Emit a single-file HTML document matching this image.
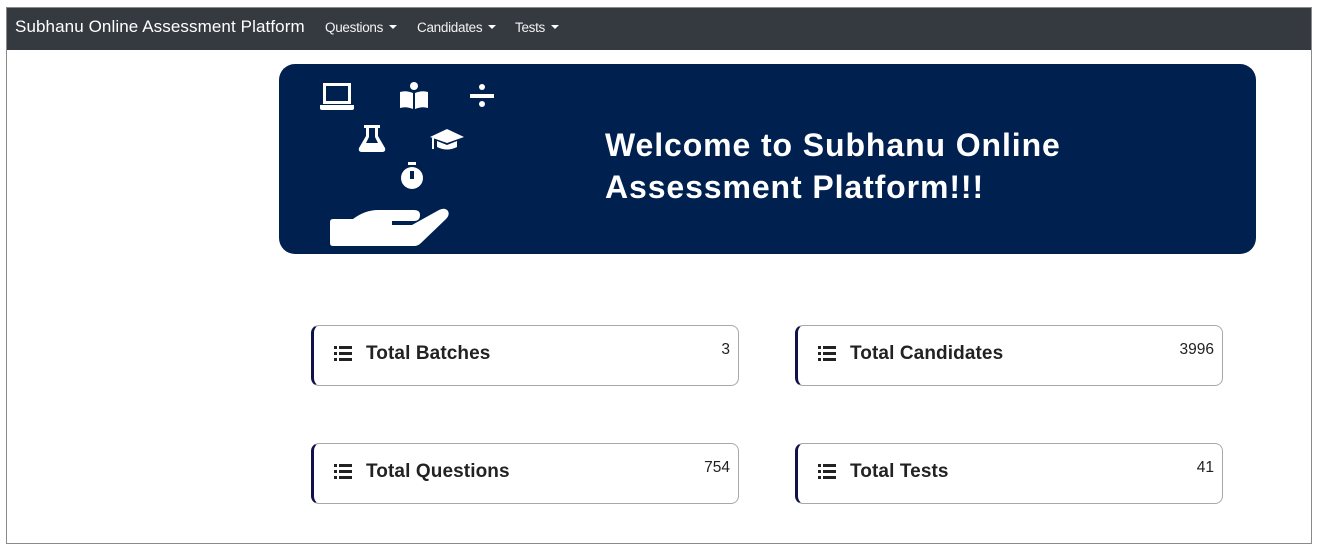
<!DOCTYPE html>
<html><head><meta charset="utf-8"><style>
*{box-sizing:border-box;margin:0;padding:0}
body{width:1320px;height:552px;background:#fff;font-family:"Liberation Sans",sans-serif;position:relative;overflow:hidden}
.frame{position:absolute;left:6px;top:7px;width:1306px;height:537px;border:1px solid #8a8a8a}
.nav{position:absolute;left:7px;top:8px;width:1304px;height:42px;background:#343a40;color:#fff}
.brand{position:absolute;left:8px;top:9px;font-size:17px;letter-spacing:0.1px}
.item{position:absolute;top:12px;font-size:13.5px;color:#f2f2f2;letter-spacing:-0.3px}
.item:after{content:"";display:inline-block;margin-left:6px;vertical-align:3px;border-left:4px solid transparent;border-right:4px solid transparent;border-top:4px solid #fff}
.banner{position:absolute;left:279px;top:64px;width:977px;height:190px;background:#00204f;border-radius:16px}
.title{position:absolute;left:605px;top:124px;color:#fff;font-size:32px;font-weight:bold;line-height:42px;letter-spacing:0.9px}
.card{position:absolute;width:428px;height:61px;border:1px solid #a8a8a8;border-left:3px solid #12124a;border-radius:8px;background:#fff}
.card .lbl{position:absolute;left:52px;top:17px;font-size:19px;color:#222;font-weight:bold;letter-spacing:0.1px}
.card .num{position:absolute;right:8px;top:15px;font-size:15.5px;color:#222}
.card svg{position:absolute;left:20px;top:20px}
</style></head><body>
<div class="frame"></div>
<div class="nav">
<div class="brand">Subhanu Online Assessment Platform</div>
<div class="item" style="left:318px">Questions</div>
<div class="item" style="left:410px">Candidates</div>
<div class="item" style="left:508px">Tests</div>
</div>
<div class="banner"></div>
<svg style="position:absolute;left:0;top:0" width="1320" height="552" fill="#fff">
<path d="M323 83h28v21h-28z M326 86v15h22v-15z" fill-rule="evenodd"/>
<path d="M320 105h34v3q0 2-2 2h-30q-2 0-2-2z"/>
<circle cx="414" cy="86" r="4"/>
<path d="M400 92q6-2 13 1v16q-7-3-13-1z M415 93q7-3 13-1v16q-6-2-13 1z"/>
<circle cx="482" cy="87" r="3"/><rect x="470" y="94" width="24" height="4"/><circle cx="482" cy="104" r="3"/>
<path d="M364 125h16v3h-2v8l7 12q1 4-3 4h-20q-4 0-3-4l7-12v-8h-2z M369 128v9l-3 6h12l-3-6v-9z" fill-rule="evenodd"/>
<path d="M430 137l17-8 17 8-17 6z M437 141v6q10 5 20 0v-6l-10 4z"/><rect x="432" y="138" width="2" height="11"/>
<rect x="408" y="162" width="8" height="3"/><circle cx="412" cy="178" r="11"/>
<rect x="410" y="171" width="4" height="8" fill="#00204f"/>
<path d="M330 222q0-3 3-3h20q12-9 25-9h36q6 0 6 5q0 6-6 6h-22v4h20l27-15q6-3 9 1q2 4-2 8l-25 24q-3 3-7 3h-81q-3 0-3-3z"/>
</svg>
<div class="title">Welcome to Subhanu Online<br>Assessment Platform!!!</div>
<svg width="0" height="0" style="position:absolute"><defs><g id="li" fill="#222"><rect x="0" y="0" width="3" height="3"/><rect x="5" y="0" width="13" height="3"/><rect x="0" y="6" width="3" height="3"/><rect x="5" y="6" width="13" height="3"/><rect x="0" y="12" width="3" height="3"/><rect x="5" y="12" width="13" height="3"/></g></defs></svg>
<div class="card" style="left:311px;top:325px"><svg width="18" height="15"><use href="#li"/></svg><div class="lbl">Total Batches</div><div class="num">3</div></div>
<div class="card" style="left:795px;top:325px"><svg width="18" height="15"><use href="#li"/></svg><div class="lbl">Total Candidates</div><div class="num">3996</div></div>
<div class="card" style="left:311px;top:443px"><svg width="18" height="15"><use href="#li"/></svg><div class="lbl">Total Questions</div><div class="num">754</div></div>
<div class="card" style="left:795px;top:443px"><svg width="18" height="15"><use href="#li"/></svg><div class="lbl">Total Tests</div><div class="num">41</div></div>
</body></html>
